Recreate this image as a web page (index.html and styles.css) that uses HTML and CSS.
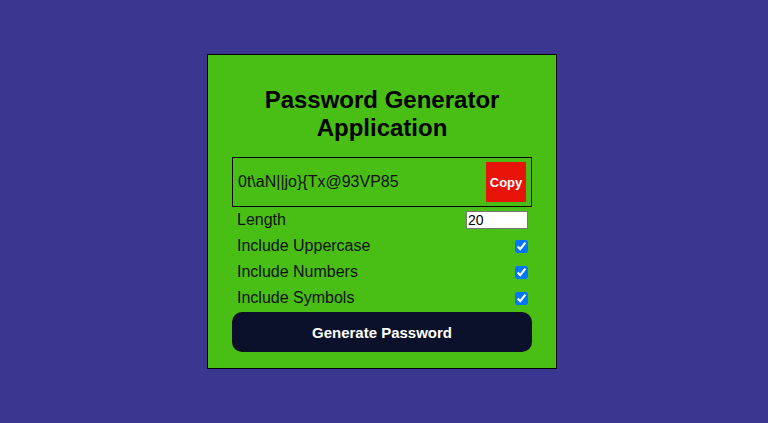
FILE: index.html
```html
<!DOCTYPE html>
<html lang="en">
<head>
<meta charset="utf-8">
<title>Password Generator</title>
<link rel="stylesheet" href="styles.css">
</head>
<body>
  <div class="card">
    <h2 class="title">Password Generator Application</h2>
    <div class="result">
      <span class="password">0t\aN||jo}{Tx@93VP85</span>
      <button class="copy">Copy</button>
    </div>
    <div class="options">
      <div class="row">
        <label>Length</label>
        <input class="length" type="number" value="20">
      </div>
      <div class="row">
        <label>Include Uppercase</label>
        <input type="checkbox" checked>
      </div>
      <div class="row">
        <label>Include Numbers</label>
        <input type="checkbox" checked>
      </div>
      <div class="row">
        <label>Include Symbols</label>
        <input type="checkbox" checked>
      </div>
    </div>
    <button class="generate">Generate Password</button>
  </div>
</body>
</html>
```
FILE: styles.css
```css
* { box-sizing: border-box; }
html, body { height: 100%; }
body {
  margin: 0;
  background: #3b368f;
  font-family: "Liberation Sans", Arial, sans-serif;
  display: flex;
  align-items: center;
  justify-content: center;
}
.card {
  width: 350px;
  margin-right: 4px;
  background: #49be14;
  border: 1px solid #000;
  padding: 31px 24px 16px;
  display: flex;
  flex-direction: column;
}
.title {
  margin: 0 0 15px;
  font-size: 24px;
  line-height: 28px;
  font-weight: bold;
  text-align: center;
  color: #000;
}
.result {
  height: 50px;
  border: 1px solid #000;
  padding: 4px 5px 4px 5px;
  display: flex;
  align-items: center;
  justify-content: space-between;
}
.password {
  font-size: 16px;
  color: #111;
}
.copy {
  width: 40px;
  height: 40px;
  border: none;
  padding: 0;
  background: #e8140a;
  color: #fff;
  font-family: "Liberation Sans", Arial, sans-serif;
  font-size: 13px;
  font-weight: bold;
}
.options {
  display: flex;
  flex-direction: column;
  margin-bottom: 1px;
}
.row {
  height: 26px;
  display: flex;
  align-items: center;
  justify-content: space-between;
  padding: 0 4px 0 5px;
  font-size: 16px;
  color: #111;
}
.length {
  width: 62px;
  height: 18px;
  margin: 0;
  padding: 0 1px;
  border: 1px solid #767676;
  font-family: "Liberation Sans", Arial, sans-serif;
  font-size: 14px;
  background: #fff;
}
.row input[type="checkbox"] {
  width: 13px;
  height: 13px;
  margin: 0;
}
.generate {
  height: 40px;
  width: 100%;
  border: none;
  border-radius: 10px;
  background: #0b112a;
  color: #fff;
  font-family: "Liberation Sans", Arial, sans-serif;
  font-size: 15px;
  font-weight: bold;
}
```
